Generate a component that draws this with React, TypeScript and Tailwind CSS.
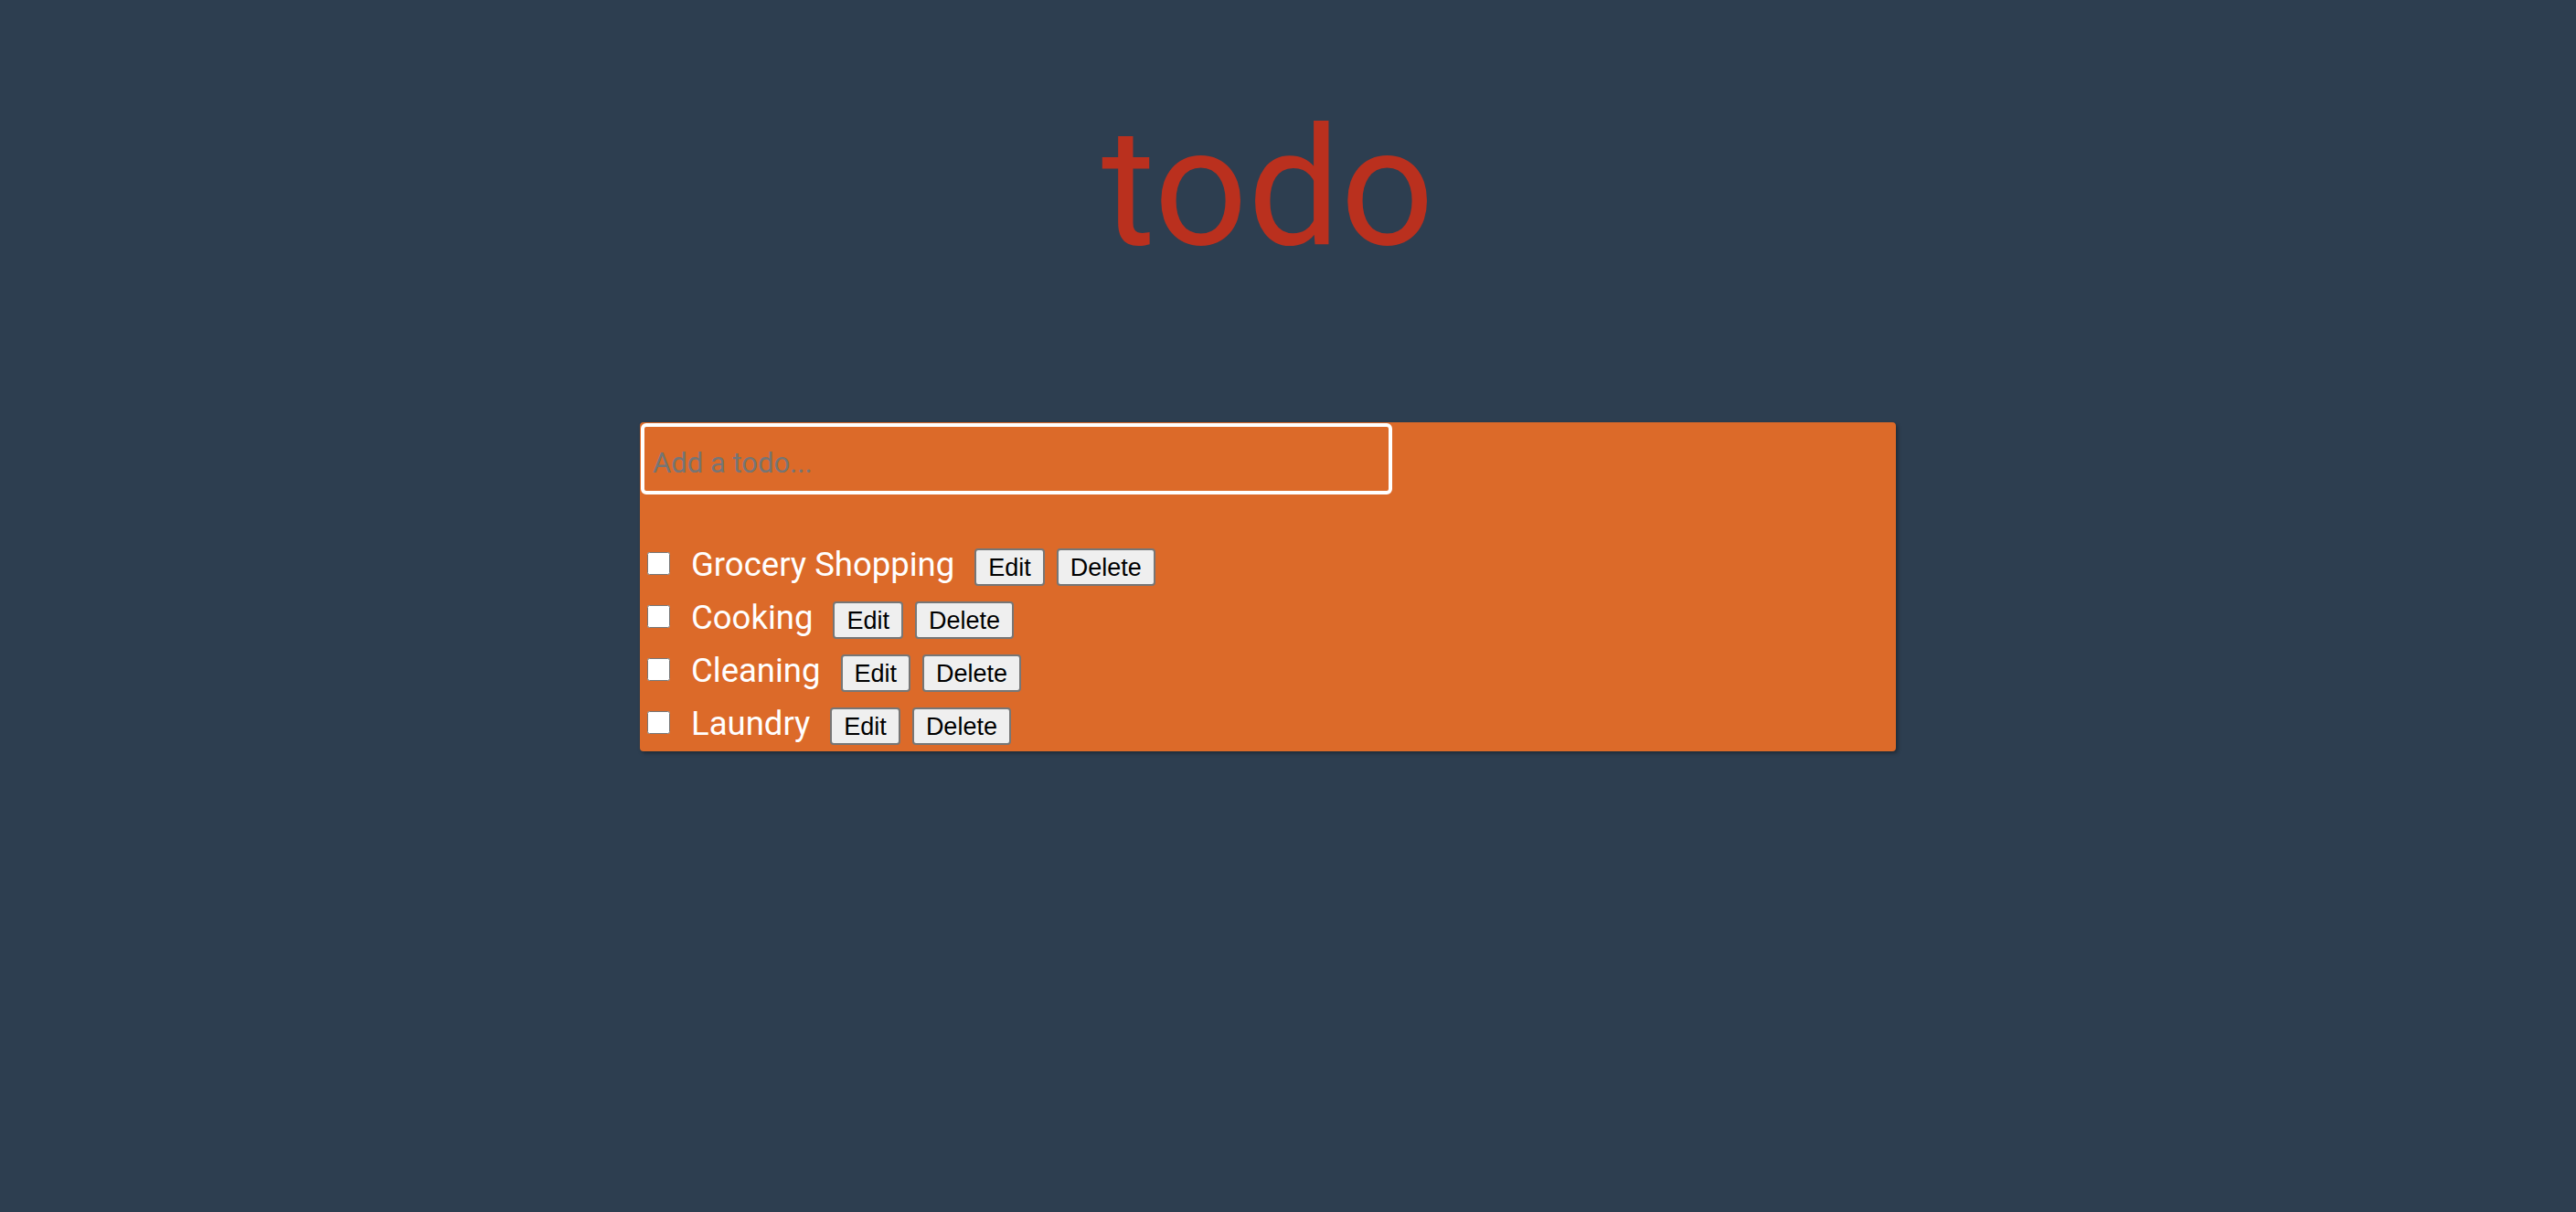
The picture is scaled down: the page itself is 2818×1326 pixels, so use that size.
import React, { useState } from "react";

type Todo = { id: number; text: string; done: boolean };

const initialTodos: Todo[] = [
  { id: 1, text: "Grocery Shopping", done: false },
  { id: 2, text: "Cooking", done: false },
  { id: 3, text: "Cleaning", done: false },
  { id: 4, text: "Laundry", done: false },
];

const App: React.FC = () => {
  const [todos, setTodos] = useState<Todo[]>(initialTodos);
  const [input, setInput] = useState("");

  const toggle = (id: number) =>
    setTodos((list) =>
      list.map((t) => (t.id === id ? { ...t, done: !t.done } : t))
    );

  const remove = (id: number) =>
    setTodos((list) => list.filter((t) => t.id !== id));

  const addTodo = (e: React.KeyboardEvent<HTMLInputElement>) => {
    if (e.key !== "Enter" || !input.trim()) return;
    setTodos((list) => [...list, { id: Date.now(), text: input, done: false }]);
    setInput("");
  };

  return (
    <div className="min-h-screen bg-[#2d3e50] font-['Roboto',sans-serif]">
      <div className="w-[2774px] flex flex-col items-center">
        <h1 className="mt-[100px] text-[180px] leading-[211px] font-normal text-[#ba301e]">
          todo
        </h1>

        <div className="mt-[151px] w-[1374px] rounded-[4px] bg-[#dc6a29] pb-[7px] shadow-[2px_2px_4px_rgba(0,0,0,0.35)]">
          <input
            value={input}
            onChange={(e) => setInput(e.target.value)}
            onKeyDown={addTodo}
            placeholder="Add a todo..."
            className="ml-[1px] mt-[1px] block w-[822px] h-[78px] rounded-[6px] border-4 border-white bg-transparent pl-[9px] pt-[9px] text-[31px] text-white placeholder:text-[#757575] outline-none"
          />

          <ul className="mt-[59px] flex flex-col gap-[17px]">
            {todos.map((todo) => (
              <li key={todo.id} className="flex items-start h-[41px]">
                <input
                  type="checkbox"
                  checked={todo.done}
                  onChange={() => toggle(todo.id)}
                  className="ml-[8px] mt-[4px] w-[25px] h-[25px] m-0"
                />
                <span className="ml-[23px] text-[36.5px] leading-[35px] text-white">
                  {todo.text}
                </span>
                <button className="ml-[22px] h-[41px] rounded-[4px] border-2 border-[#767676] bg-[#efefef] px-[13px] pt-[2px] font-['Liberation_Sans',Arial,sans-serif] text-[27px] leading-[31px] text-black">
                  Edit
                </button>
                <button
                  onClick={() => remove(todo.id)}
                  className="ml-[13px] h-[41px] rounded-[4px] border-2 border-[#767676] bg-[#efefef] px-[13px] pt-[2px] font-['Liberation_Sans',Arial,sans-serif] text-[27px] leading-[31px] text-black"
                >
                  Delete
                </button>
              </li>
            ))}
          </ul>
        </div>
      </div>
    </div>
  );
};

export default App;
